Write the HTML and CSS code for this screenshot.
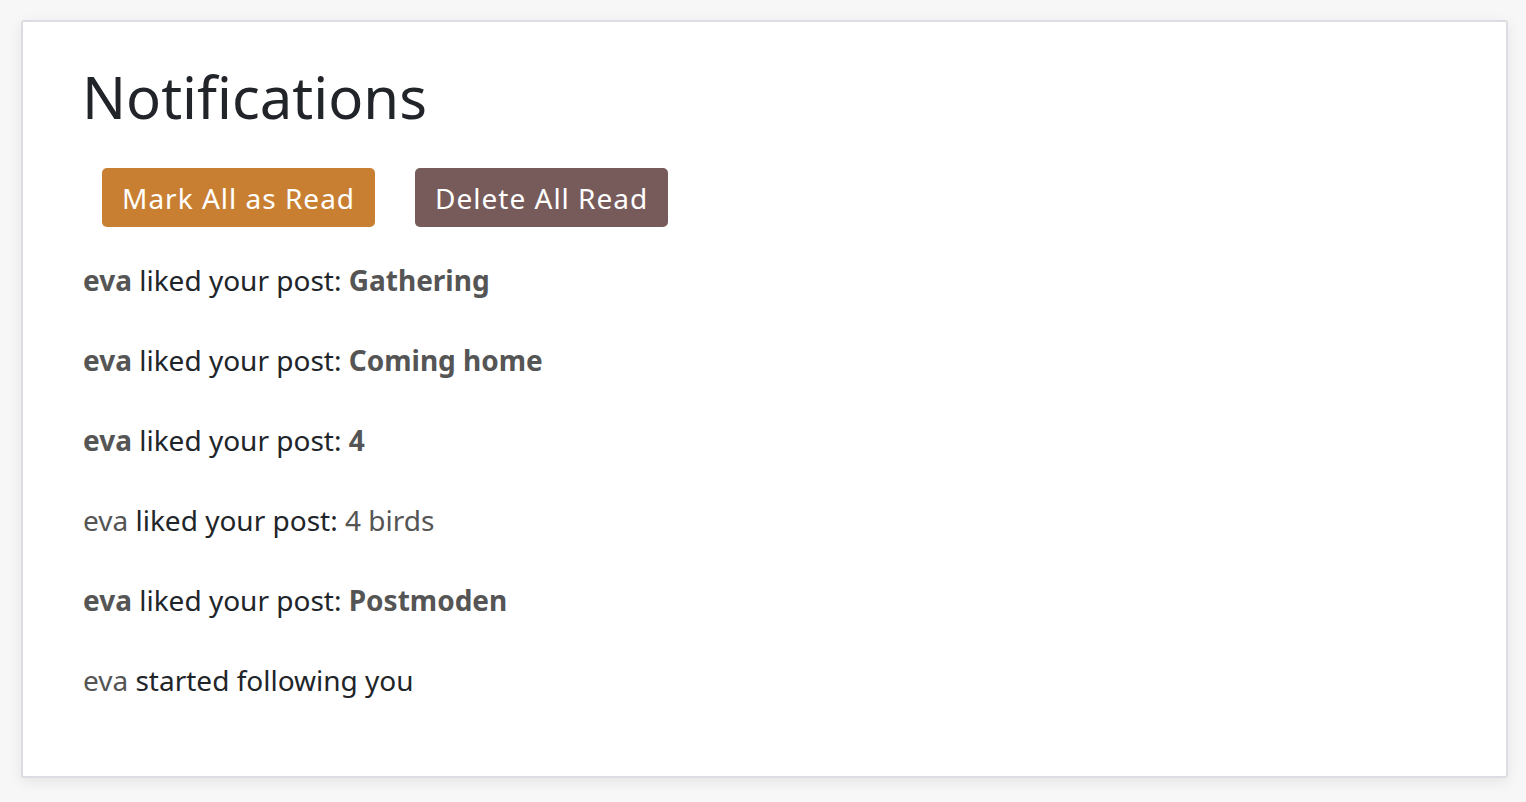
FILE: index.html
```html
<!DOCTYPE html>
<html>
<head>
<meta charset="utf-8">
<link rel="stylesheet" href="styles.css">
</head>
<body>
<div class="card">
  <h1 class="title">Notifications</h1>
  <div class="actions">
    <button class="btn btn-mark">Mark All as Read</button>
    <button class="btn btn-delete">Delete All Read</button>
  </div>
  <ul class="list">
    <li class="item unread"><span class="who">eva</span> liked your post: <span class="what">Gathering</span></li>
    <li class="item unread"><span class="who">eva</span> liked your post: <span class="what">Coming home</span></li>
    <li class="item unread"><span class="who">eva</span> liked your post: <span class="what">4</span></li>
    <li class="item read"><span class="who">eva</span> liked your post: <span class="what">4 birds</span></li>
    <li class="item unread"><span class="who">eva</span> liked your post: <span class="what">Postmoden</span></li>
    <li class="item read"><span class="who">eva</span> started following you</li>
  </ul>
</div>
</body>
</html>
```

FILE: styles.css
```css
html, body {
  margin: 0;
  padding: 0;
}
body {
  background: #f7f7f7;
  font-family: "Noto Sans", "Lato", sans-serif;
  color: #212529;
  height: 802px;
  overflow: hidden;
}
.card {
  margin: 20px 18px 0 21px;
  height: 754px;
  background: #fff;
  border: 2px solid #dedce2;
  border-radius: 3px;
  box-shadow: 0 4px 14px rgba(0,0,0,0.08);
  padding: 0 60px;
  box-sizing: content-box;
}
.title {
  margin: 0 0 0 -1px;
  padding-top: 39px;
  font-size: 58px;
  font-weight: 400;
  line-height: 72px;
  color: #212529;
}
.actions {
  display: flex;
  gap: 40px;
  margin-top: 35px;
  padding-left: 19px;
}
.btn {
  height: 59px;
  border: none;
  border-radius: 5px;
  color: #fff;
  font-family: "Noto Sans", sans-serif;
  font-size: 28px;
  letter-spacing: 1px;
  padding: 0 20px;
}
.btn-mark { background: #c97f32; }
.btn-delete { background: #775b5b; }
.list {
  list-style: none;
  margin: 20px 0 0 0;
  padding: 0;
}
.item {
  height: 80px;
  line-height: 66px;
  font-size: 28px;
  color: #212529;
}
.unread .who, .unread .what {
  font-weight: 700;
  color: #555;
}
.read .who, .read .what {
  color: #555;
}
```
